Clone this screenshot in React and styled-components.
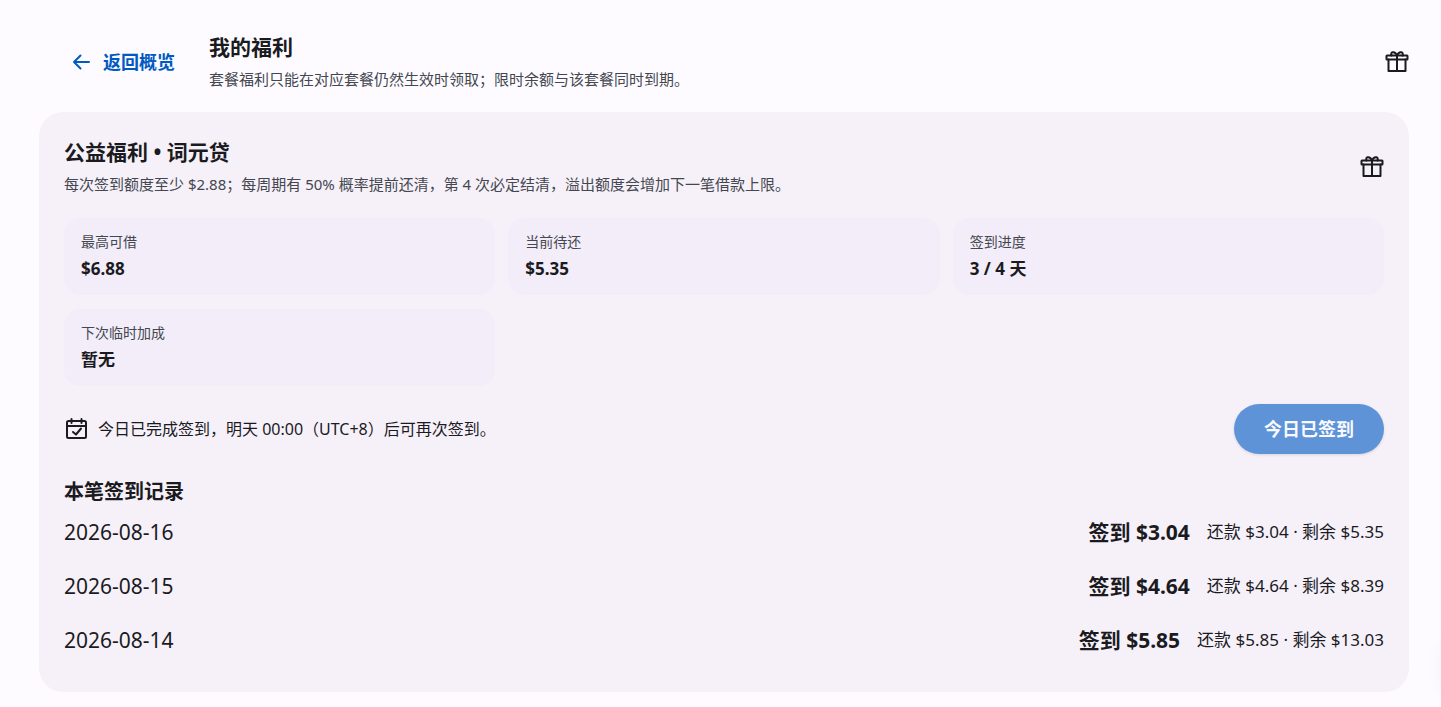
import React from "react";
import styled, { createGlobalStyle } from "styled-components";

const GlobalStyle = createGlobalStyle`
  * { box-sizing: border-box; }
  body {
    margin: 0;
    background: #fdfbff;
    color: #1b1b1f;
    font-family: "Noto Sans", "Noto Sans CJK SC", sans-serif;
  }
  h1, h2, h3, p, dl, dd, ul { margin: 0; padding: 0; }
`;

const Page = styled.main`
  display: flex;
  flex-direction: column;
  gap: 20px;
  padding: 32px 32px 15px 39px;
`;

const PageHeader = styled.header`
  display: flex;
  align-items: center;
  gap: 16px;
`;

const BackLink = styled.a`
  display: flex;
  align-items: center;
  gap: 9px;
  padding: 12px 18px 12px 31px;
  color: #005ac1;
  font-size: 18px;
  line-height: 24px;
  font-weight: 700;
  text-decoration: none;
`;

const HeaderText = styled.div`
  flex: 1;
`;

const Title = styled.h2`
  font-size: 21px;
  line-height: 30px;
  font-weight: 700;
`;

const Subtitle = styled.p`
  && {
    margin-top: 4px;
  }
  color: #44474f;
  font-size: 15px;
  line-height: 26px;
`;

const Icon = styled.svg`
  flex: none;
  display: block;
  width: 24px;
  height: 24px;
  fill: none;
  stroke: currentColor;
  stroke-width: 2;
  stroke-linecap: round;
  stroke-linejoin: round;
`;

const Card = styled.section`
  display: flex;
  flex-direction: column;
  gap: 18px;
  padding: 25px;
  border-radius: 24px;
  background: #f6f1f9;
`;

const CardHeader = styled.div`
  display: flex;
  align-items: center;
  justify-content: space-between;
  padding-bottom: 3px;
`;

const Stats = styled.dl`
  display: grid;
  grid-template-columns: repeat(3, 1fr);
  gap: 14px 13px;
`;

const Stat = styled.div`
  padding: 12px 17px 11px;
  border-radius: 16px;
  background: #f2edf8;
`;

const StatLabel = styled.dt`
  color: #44474f;
  font-size: 14px;
  line-height: 24px;
`;

const StatValue = styled.dd`
  font-size: 17px;
  line-height: 30px;
  font-weight: 700;
`;

const CheckInBar = styled.div`
  display: flex;
  align-items: center;
  justify-content: space-between;
`;

const Status = styled.p`
  display: flex;
  align-items: center;
  gap: 10px;
  font-size: 16px;
  line-height: 24px;
`;

const CheckInButton = styled.button`
  height: 50px;
  padding: 0 30px 2px;
  border: 0;
  border-radius: 25px;
  background: #5e93d7;
  color: #f8faff;
  font: inherit;
  font-size: 18px;
  font-weight: 700;
  box-shadow: 0 1px 3px rgba(0, 0, 0, 0.12);
`;

const RecordsSection = styled.div`
  padding-top: 6px;
`;

const RecordsTitle = styled.h3`
  font-size: 20px;
  line-height: 27px;
  font-weight: 700;
`;

const Records = styled.ul`
  list-style: none;
`;

const Record = styled.li`
  display: flex;
  align-items: center;
  justify-content: space-between;
  height: 54px;
`;

const RecordDate = styled.time`
  font-size: 21px;
`;

const RecordAmounts = styled.div`
  display: flex;
  align-items: flex-start;
  gap: 17px;
`;

const Amount = styled.strong`
  font-size: 21px;
  line-height: 28px;
  font-weight: 700;
`;

const Detail = styled.span`
  font-size: 17px;
  line-height: 27px;
`;

const FloatingPanel = styled.aside`
  position: fixed;
  right: -56px;
  bottom: 16px;
  width: 56px;
  height: 56px;
  border-radius: 16px;
  box-shadow: 0 4px 20px rgba(27, 27, 31, 0.04);
`;

const stats = [
  { label: "最高可借", value: "$6.88" },
  { label: "当前待还", value: "$5.35" },
  { label: "签到进度", value: "3 / 4 天" },
  { label: "下次临时加成", value: "暂无" },
];

const records = [
  { date: "2026-08-16", amount: "$3.04", left: "$5.35" },
  { date: "2026-08-15", amount: "$4.64", left: "$8.39" },
  { date: "2026-08-14", amount: "$5.85", left: "$13.03" },
];

const GiftIcon = () => (
  <Icon viewBox="0 0 24 24" aria-hidden="true">
    <rect x="1.5" y="5.5" width="21" height="4" rx="0.5" />
    <path d="M3.5 9.5V21h17V9.5 M12 5.5V21" />
    <path d="M12 5.5C11 3 9 2 7.5 2.3 6 2.7 6 4.5 6.5 5.500 M12 5.5C13 3 15 2 16.500 2.3 18 2.7 18 4.5 17.500 5.5" />
  </Icon>
);

const ArrowIcon = () => (
  <Icon viewBox="0 0 24 24" aria-hidden="true">
    <path d="M19 12H4 M10.5 5.5L4 12l6.5 6.5" />
  </Icon>
);

const CalendarIcon = () => (
  <Icon viewBox="0 0 24 24" aria-hidden="true">
    <rect x="3" y="4" width="19" height="17" rx="1.5" />
    <path d="M3 9h19 M7.5 2v4 M17.5 2v4 M9 15l3 2.5 5-6" />
  </Icon>
);

export default function App() {
  return (
    <>
      <GlobalStyle />
      <Page>
        <PageHeader>
          <BackLink href="#overview">
            <ArrowIcon />
            返回概览
          </BackLink>
          <HeaderText>
            <Title as="h1">我的福利</Title>
            <Subtitle>套餐福利只能在对应套餐仍然生效时领取；限时余额与该套餐同时到期。</Subtitle>
          </HeaderText>
          <GiftIcon />
        </PageHeader>
        <Card>
          <CardHeader>
            <div>
              <Title>公益福利 • 词元贷</Title>
              <Subtitle>
                每次签到额度至少 $2.88；每周期有 50% 概率提前还清，第 4 次必定结清，溢出额度会增加下一笔借款上限。
              </Subtitle>
            </div>
            <GiftIcon />
          </CardHeader>
          <Stats>
            {stats.map((s) => (
              <Stat key={s.label}>
                <StatLabel>{s.label}</StatLabel>
                <StatValue>{s.value}</StatValue>
              </Stat>
            ))}
          </Stats>
          <CheckInBar>
            <Status>
              <CalendarIcon />
              今日已完成签到，明天 00:00（UTC+8）后可再次签到。
            </Status>
            <CheckInButton type="button">今日已签到</CheckInButton>
          </CheckInBar>
          <RecordsSection>
            <RecordsTitle>本笔签到记录</RecordsTitle>
            <Records>
              {records.map((r) => (
                <Record key={r.date}>
                  <RecordDate dateTime={r.date}>{r.date}</RecordDate>
                  <RecordAmounts>
                    <Amount>签到 {r.amount}</Amount>
                    <Detail>
                      还款 {r.amount} · 剩余 {r.left}
                    </Detail>
                  </RecordAmounts>
                </Record>
              ))}
            </Records>
          </RecordsSection>
        </Card>
      </Page>
      <FloatingPanel aria-hidden="true" />
    </>
  );
}
